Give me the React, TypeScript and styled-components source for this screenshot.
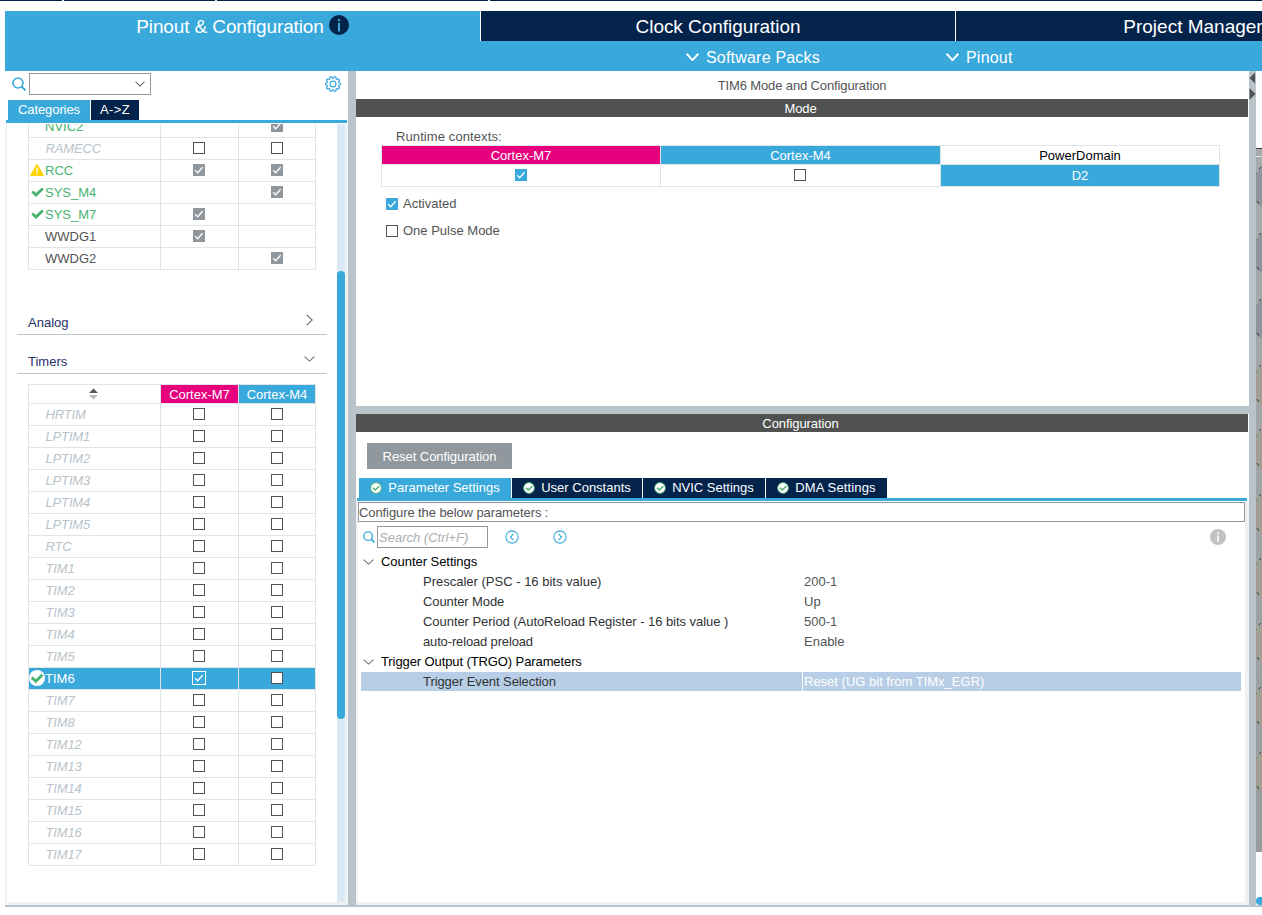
import React from 'react';
import styled, { createGlobalStyle, css } from 'styled-components';

const c = {
  blue: '#39a9dc', navy: '#03234b', pink: '#e6007e', split: '#b8c4ca', bar: '#4f5251',
  line: '#e1e4e7', text: '#525355', grey: '#90989e', green: '#49b170', pale: '#b9c3ca',
};

const Global = createGlobalStyle`
  * { box-sizing: border-box; }
  body { margin: 0; background: #fff; font: 13px/16px "Liberation Sans", Arial, sans-serif; color: ${c.text}; overflow: hidden; }
`;

const Page = styled.div`width: 1262px; height: 915px; overflow: hidden; display: flex; flex-direction: column;`;
const TopStrip = styled.div`display: flex; gap: 2px; height: 1px; margin-bottom: 10px; flex: none;`;
const Strip = styled.div<{ w?: number }>`background: ${c.navy}; ${p => p.w ? `width: ${p.w}px;` : 'flex: 1;'}`;

const Header = styled.header`margin-left: 5px; height: 60px; flex: none; background: ${c.blue}; color: #fff;`;
const MainTabs = styled.nav`display: flex; height: 30px; gap: 1px;`;
const MainTab = styled.div<{ $active?: boolean }>`
  flex: none; width: ${p => p.$active ? 475 : 474}px; height: 30px; display: flex; justify-content: center; align-items: center; gap: 5px;
  background: ${p => p.$active ? c.blue : c.navy}; font-size: 19px; line-height: 28px; white-space: nowrap;
  box-shadow: 1px 0 0 #fff;
  span { padding-top: 2px; }
  svg { margin-bottom: 2px; }
`;
const SubBar = styled.div`display: flex; height: 30px; padding-left: 681px;`;
const SubMenu = styled.div<{ w: number }>`
  width: ${p => p.w}px; display: flex; align-items: center; gap: 7px; font-size: 16px; line-height: 30px;
  span { padding-top: 3px; }
  svg { margin-top: 2px; }
`;

const Body = styled.main`display: flex; height: 834px; margin-left: 5px; flex: none;`;
const BottomEdge = styled.div`height: 2px; margin-left: 5px; background: ${c.split}; flex: none;`;
const Splitter = styled.div<{ w: number }>`width: ${p => p.w}px; flex: none; background: ${c.split};`;
const HSplit = styled.div`height: 8px; margin-right: -1px; flex: none; background: ${c.split};`;

const Left = styled.aside`width: 343px; flex: none; display: flex; flex-direction: column;`;
const SearchRow = styled.div`
  height: 29px; display: flex; align-items: center; padding: 0 0 3px 7px;
  svg { flex: none; }
`;
const Combo = styled.div`width: 122px; height: 22px; border: 1px solid ${c.grey}; margin: 0 174px 0 3px; display: flex; justify-content: flex-end; align-items: center; padding-right: 5px;`;
const Tabs = styled.div<{ pl: number }>`display: flex; gap: 1px; height: 20px; padding-left: ${p => p.pl}px; flex: none;`;
const Tab = styled.div<{ w: number; $active?: boolean; ls?: number }>`
  width: ${p => p.w}px; height: 20px; display: flex; align-items: center; justify-content: center; gap: 6px; white-space: nowrap;
  background: ${p => p.$active ? c.blue : c.navy}; color: #fff; letter-spacing: ${p => p.ls ?? 0}px;
`;
const BlueLine = styled.div`height: 3px; margin: 0 1px; flex: none; background: ${c.blue};`;
const ScrollArea = styled.div`
  flex: 1; min-height: 0; margin-top: 1px; overflow: hidden; display: flex;
  border: solid #f0f1f2; border-width: 0 3px 3px 2px;
`;
const ScrollContent = styled.div`flex: 1; margin-top: -8px; min-width: 0; height: 786px;`;
const Track = styled.div`width: 8px; background: #dae9f5; padding-top: 147px;`;
const Thumb = styled.div`height: 448px; border-radius: 4px; background: ${c.blue};`;

const Table = styled.div`margin-left: 21px; width: 288px; border-left: 1px solid ${c.line};`;
const Row = styled.div<{ $head?: boolean; $sel?: boolean }>`
  display: grid; grid-template-columns: 132px 78px 77px; height: ${p => p.$head ? 20 : 22}px;
  ${p => p.$head && css`border-top: 1px solid ${c.line};`}
  background: ${p => p.$sel ? c.blue : '#fff'};
`;
const Cell = styled.div`border: solid ${c.line}; border-width: 0 1px 1px 0; display: flex; align-items: center; padding: 0 0 1px 32px;`;
const NameCell = styled(Cell)<{ kind: Kind }>`
  padding: 0;
  color: ${p => ({ off: c.pale, ok: c.green, warn: c.green, green: c.green, plain: c.text, sel: '#fff' })[p.kind]};
  ${p => p.kind === 'off' && 'font-style: italic; letter-spacing: -.15px; padding-left: .5px;'}
`;
const IconSlot = styled.span`width: 16px; height: 16px; margin-bottom: 1px; flex: none; display: flex; align-items: center; justify-content: center;`;
const HeadCell = styled(Cell)<{ bg?: string }>`padding: 1px 0 0; justify-content: center; color: #fff; background: ${p => p.bg ?? '#fff'}; background-clip: padding-box; svg { margin: 0 2px 2px 0; }`;
const Section = styled.div<{ h: number }>`
  margin: 0 10px 0 10px; height: ${p => p.h}px; border-bottom: 1px solid ${c.split}; color: #28316a;
  display: flex; align-items: flex-end; justify-content: space-between; padding: 0 12px 3px 11px;
`;
const SectionIcon = styled.span`width: 11px; height: 22px; flex: none; display: flex; align-items: center; justify-content: center;`;

const BoxEl = styled.span<{ bg: string; bd: string; $big?: boolean }>`
  width: 12px; height: 12px; flex: none; display: flex; align-items: center; justify-content: center;
  border: 1px solid ${p => p.bd}; background: ${p => p.bg};
  ${p => p.$big && css`width: 14px; height: 14px; margin-left: -1px;`}
`;

const Middle = styled.section`width: 893px; flex: none; padding-right: 1px; background: #fff; display: flex; flex-direction: column;`;
const Title = styled.div`height: 28px; line-height: 30px; text-align: center; letter-spacing: -.12px;`;
const Bar = styled.div`height: 18px; line-height: 19px; flex: none; text-align: center; background: ${c.bar}; color: #fff; padding-right: 3px; letter-spacing: -.08px;`;
const ModePane = styled.div`height: 289px; flex: none; padding: 12px 28px 0 25px;`;
const Contexts = styled.div`display: grid; grid-template-columns: 279px 280px 279px; grid-template-rows: 19px 22px; border: solid ${c.line}; border-width: 1px 0 0 1px;`;
const Ctx = styled.div<{ bg?: string; fg?: string; $head?: boolean; $nudge?: boolean }>`
  border: solid ${c.line}; border-width: 0 1px 1px 0; background: ${p => p.bg ?? '#fff'}; background-clip: padding-box; color: ${p => p.fg ?? '#fff'};
  display: flex; align-items: center; justify-content: center;
  padding: ${p => p.$head ? '2px 0 0' : p.bg ? '0' : '0 0 1px'};
  ${p => p.$nudge && 'padding-right: 1px;'}
`;
const RuntimeLabel = styled.div`height: 16px; padding-left: 15px; letter-spacing: .1px;`;
const CheckLine = styled.div`display: flex; align-items: center; gap: 5px; height: 27px; padding-left: 5px;`;

const Button = styled.div`width: 145px; height: 26px; margin: 11px 0 9px 11px; background: ${c.grey}; color: #fff; text-align: center; line-height: 27px; letter-spacing: -.06px; flex: none;`;
const ConfigArea = styled.div`flex: 1; min-height: 0; margin-right: -1px; padding-top: 1px; border: solid #f0f1f2; border-width: 0 4px 3px 2px;`;
const Describe = styled.div`height: 20px; border: 1px solid ${c.grey}; line-height: 19px; letter-spacing: -.09px;`;
const FindRow = styled.div`height: 30px; display: flex; align-items: center; padding-left: 5px;`;
const Find = styled.div`width: 111px; height: 22px; margin: 0 17px 0 2px; border: 1px solid ${c.grey}; color: #a9aeb2; font-style: italic; line-height: 21px; padding-left: 1px;`;
const Group = styled.div`height: 20px; display: flex; align-items: center; gap: 7px; padding-left: 5px; color: #000; letter-spacing: -.04px;`;
const Param = styled.div<{ $sel?: boolean }>`
  height: ${p => p.$sel ? 19 : 20}px; margin: 0 4px 0 3px; display: grid; grid-template-columns: 441px 1fr; line-height: 19px;
  background: ${p => p.$sel ? '#b8cee6' : 'transparent'};
`;
const ParamName = styled.div<{ ls?: number }>`padding-left: 62px; color: #303234; letter-spacing: ${p => p.ls ?? 0}px;`;
const ParamValue = styled.div<{ $sel?: boolean }>`padding-left: 2px; ${p => p.$sel && 'padding-left: 1px; border-left: 1px solid #fff; color: #fff;'}`;
const Gap = styled.div<{ w?: number; h?: number }>`width: ${p => p.w ?? 0}px; height: ${p => p.h ?? 0}px; flex: none;`;

const PinView = styled.div`width: 6px; flex: none; height: 834px;`;
const Txt = styled.span<{ ls?: number }>`letter-spacing: ${p => p.ls ?? 0}px; white-space: pre;`;

type Kind = 'off' | 'ok' | 'warn' | 'green' | 'plain' | 'sel';
type Mark = 'none' | 'empty' | 'grey' | 'blue' | 'sel';

const Box = ({ mark }: { mark: Mark }) => {
  if (mark === 'none') return null;
  const bg = { empty: '#fff', grey: c.grey, blue: c.blue, sel: c.blue }[mark];
  const bd = { empty: c.text, grey: c.grey, blue: c.blue, sel: '#fff' }[mark];
  return (
    <BoxEl bg={bg} bd={bd} $big={mark === 'sel'}>
      {mark !== 'empty' && <svg width="10" height="10" viewBox="0 0 10 10" overflow="visible"><path d="M1.2 5.2 3.7 7.7 8.6 2.2" fill="none" stroke="#fff" strokeWidth="1.3" /></svg>}
    </BoxEl>
  );
};

const Chevron = ({ w = 10, h = 6, s = 1.1, color = '#6d7174' }) => (
  <svg width={w} height={h} viewBox={`0 0 ${w} ${h}`}><path d={`M.6 .7 ${w / 2} ${h - 0.9} ${w - 0.6} .7`} fill="none" stroke={color} strokeWidth={s} /></svg>
);
const Search = ({ size }: { size: number }) => (
  <svg width={size} height={size} viewBox="0 0 14 14" fill="none" stroke={c.blue}><circle cx="6" cy="6" r="5" strokeWidth="1.6" /><path d="M9.6 9.6 13.4 13.4" strokeWidth="2" /></svg>
);
const Gear = () => {
  let d = '';
  for (let i = 0; i <= 80; i++) {
    const a = (i / 80) * Math.PI * 2;
    const r = 6.8 + 0.8 * Math.max(-1, Math.min(1, 1.8 * Math.cos(a * 10)));
    d += `${i ? 'L' : 'M'}${(8 + r * Math.cos(a)).toFixed(2)} ${(8 + r * Math.sin(a)).toFixed(2)}`;
  }
  return <svg width="16" height="16" viewBox="0 0 16 16" fill="none" stroke={c.blue} strokeWidth="1.2"><path d={d + 'Z'} /><circle cx="8" cy="8" r="2.9" /></svg>;
};
const Info = ({ size, bg, fg }: { size: number; bg: string; fg: string }) => (
  <svg width={size} height={size} viewBox="0 0 20 20"><circle cx="10" cy="10" r="10" fill={bg} /><path d="M10 8V16.4M10 4v2.2" stroke={fg} strokeWidth="2" /></svg>
);
const Tick = () => <svg width="13" height="10" viewBox="0 0 13 10"><path d="M1.3 4.4 5 8 11.8 1.4" fill="none" stroke={c.green} strokeWidth="2.8" /></svg>;
const RoundTick = () => <svg width="16" height="16" viewBox="0 0 16 16"><circle cx="8" cy="8" r="8" fill="#fff" /><path d="M2.8 7.4 6.8 11.2 13.4 4.8" fill="none" stroke={c.green} strokeWidth="2.8" /></svg>;
const Warn = () => <svg width="14" height="12" viewBox="0 0 14 12"><path d="M7 .8 13 11.2H1Z" fill="#ffd200" stroke="#ffd200" strokeWidth="1.4" strokeLinejoin="round" /><path d="M7 3.6V8M7 9V10.3" stroke="#fff" strokeWidth="1.3" /></svg>;
const TabTick = () => <svg width="12" height="12" viewBox="0 0 12 12"><circle cx="6" cy="6" r="5.4" fill="#fff" stroke={c.green} strokeWidth=".9" /><path d="M3 5.8 5.3 8 9.2 4.2" fill="none" stroke={c.green} strokeWidth="1.5" /></svg>;
const Nav = ({ d }: { d: string }) => <svg width="14" height="14" viewBox="0 0 14 14" fill="none" stroke={c.blue}><circle cx="7" cy="7" r="6.1" strokeWidth="1.1" /><path d={d} strokeWidth="1.2" /></svg>;
const Sort = () => <svg width="9" height="12" viewBox="0 0 9 12"><path d="M0 5 4.5 .5 9 5Z" fill="#555a5d" /><path d="M0 7 4.5 11.5 9 7Z" fill="#b8bcbf" /></svg>;

const system: [string, Kind, Mark, Mark][] = [
  ['NVIC2', 'green', 'none', 'grey'], ['RAMECC', 'off', 'empty', 'empty'], ['RCC', 'warn', 'grey', 'grey'],
  ['SYS_M4', 'ok', 'none', 'grey'], ['SYS_M7', 'ok', 'grey', 'none'], ['WWDG1', 'plain', 'grey', 'none'], ['WWDG2', 'plain', 'none', 'grey'],
];
const timers = ['HRTIM', 'LPTIM1', 'LPTIM2', 'LPTIM3', 'LPTIM4', 'LPTIM5', 'RTC', 'TIM1', 'TIM2', 'TIM3', 'TIM4', 'TIM5', 'TIM6', 'TIM7', 'TIM8', 'TIM12', 'TIM13', 'TIM14', 'TIM15', 'TIM16', 'TIM17'];

const Peripheral = ({ name, kind, a, b }: { name: string; kind: Kind; a: Mark; b: Mark }) => (
  <Row $sel={kind === 'sel'}>
    <NameCell kind={kind}><IconSlot>{kind === 'ok' && <Tick />}{kind === 'warn' && <Warn />}{kind === 'sel' && <RoundTick />}</IconSlot>{name}</NameCell>
    <Cell><Box mark={a} /></Cell>
    <Cell><Box mark={b} /></Cell>
  </Row>
);

const pinYs = [166, 232, 298, 364, 428, 493, 557, 622, 686, 751];

export default function App() {
  return (
    <Page>
      <Global />
      <TopStrip><Strip w={62} /><Strip w={151} /><Strip w={271} /><Strip /></TopStrip>
      <Header>
        <MainTabs>
          <MainTab $active><Txt ls={-0.12}>Pinout &amp; Configuration</Txt><Info size={20} bg={c.navy} fg={c.blue} /></MainTab>
          <MainTab><Txt ls={-0.05}>Clock Configuration</Txt></MainTab>
          <MainTab><Txt>Project Manager</Txt></MainTab>
        </MainTabs>
        <SubBar>
          <SubMenu w={260}><Chevron w={13} h={8} s={2} color="#fff" /><Txt ls={0.2}>Software Packs</Txt></SubMenu>
          <SubMenu w={200}><Chevron w={13} h={8} s={2} color="#fff" /><Txt ls={0.2}>Pinout</Txt></SubMenu>
        </SubBar>
      </Header>
      <Body>
        <Left>
          <SearchRow><Search size={14} /><Combo><Chevron /></Combo><Gear /></SearchRow>
          <Tabs pl={3}><Tab w={82} $active ls={-0.1}>Categories</Tab><Tab w={48} ls={0.4}>A-&gt;Z</Tab></Tabs>
          <BlueLine />
          <ScrollArea>
            <ScrollContent>
              <Table>{system.map(([n, k, a, b]) => <Peripheral key={n} name={n} kind={k} a={a} b={b} />)}</Table>
              <Gap h={25} />
              <Section h={40}>Analog<SectionIcon><svg width="7" height="12" viewBox="0 0 7 12"><path d="M.7 .8 6.2 6 .7 11.2" fill="none" stroke="#6d7174" strokeWidth="1.1" /></svg></SectionIcon></Section>
              <Section h={39}>Timers<SectionIcon><Chevron w={11} /></SectionIcon></Section>
              <Gap h={10} />
              <Table>
                <Row $head><HeadCell><Sort /></HeadCell><HeadCell bg={c.pink}>Cortex-M7</HeadCell><HeadCell bg={c.blue}>Cortex-M4</HeadCell></Row>
                {timers.map(n => <Peripheral key={n} name={n} kind={n === 'TIM6' ? 'sel' : 'off'} a={n === 'TIM6' ? 'sel' : 'empty'} b="empty" />)}
              </Table>
            </ScrollContent>
            <Track><Thumb /></Track>
          </ScrollArea>
        </Left>
        <Splitter w={8} />
        <Middle>
          <Title>TIM6 Mode and Configuration</Title>
          <Bar>Mode</Bar>
          <ModePane>
            <RuntimeLabel>Runtime contexts:</RuntimeLabel>
            <Contexts>
              <Ctx $head bg={c.pink}>Cortex-M7</Ctx><Ctx $head bg={c.blue}>Cortex-M4</Ctx><Ctx $head fg="#000">PowerDomain</Ctx>
              <Ctx><Box mark="blue" /></Ctx><Ctx $nudge><Box mark="empty" /></Ctx><Ctx bg={c.blue}>D2</Ctx>
            </Contexts>
            <Gap h={3} />
            <CheckLine><Box mark="blue" />Activated</CheckLine>
            <CheckLine><Box mark="empty" />One Pulse Mode</CheckLine>
          </ModePane>
          <HSplit />
          <Bar>Configuration</Bar>
          <Button>Reset Configuration</Button>
          <Tabs pl={3}>
            <Tab w={152} $active><TabTick />Parameter Settings</Tab>
            <Tab w={130}><TabTick />User Constants</Tab>
            <Tab w={122}><TabTick />NVIC Settings</Tab>
            <Tab w={121} ls={0.15}><TabTick />DMA Settings</Tab>
          </Tabs>
          <BlueLine />
          <ConfigArea>
            <Describe>Configure the below parameters :</Describe>
            <FindRow>
              <Search size={12} /><Find>Search (Ctrl+F)</Find>
              <Nav d="M8.3 4.2 5.5 7l2.8 2.8" /><Gap w={34} /><Nav d="M5.7 4.2 8.5 7 5.7 9.8" />
              <Gap w={643} /><Info size={16} bg="#c2c2c2" fg="#fff" />
            </FindRow>
            <Group><Chevron w={11} />Counter Settings</Group>
            <Param><ParamName>Prescaler (PSC - 16 bits value)</ParamName><ParamValue>200-1</ParamValue></Param>
            <Param><ParamName ls={-0.1}>Counter Mode</ParamName><ParamValue>Up</ParamValue></Param>
            <Param><ParamName ls={-0.05}>Counter Period (AutoReload Register - 16 bits value )</ParamName><ParamValue>500-1</ParamValue></Param>
            <Param><ParamName ls={-0.15}>auto-reload preload</ParamName><ParamValue>Enable</ParamValue></Param>
            <Group><Chevron w={11} /><Txt ls={-0.1}>Trigger Output (TRGO) Parameters</Txt></Group>
            <Param $sel><ParamName ls={-0.08}>Trigger Event Selection</ParamName><ParamValue $sel>Reset (UG bit from TIMx_EGR)</ParamValue></Param>
          </ConfigArea>
        </Middle>
        <Splitter w={7}>
          <svg width="7" height="32" viewBox="0 0 7 32"><path d="M6 1.5V12.5L.5 7ZM.5 17V29L6.5 23Z" fill="#515456" /></svg>
        </Splitter>
        <PinView>
          <svg width="6" height="834" viewBox="0 71 6 834">
            <defs><linearGradient id="chip" x1="0" x2="0" y1="0" y2="1"><stop offset="0" stopColor="#a7abac" /><stop offset="1" stopColor="#999c9d" /></linearGradient></defs>
            <rect y="148" width="6" height="704" fill="url(#chip)" />
            <path d="M0 148.5H6" stroke="#404344" /><path d="M0 156.5H6" stroke="#e4e5e6" />
            {pinYs.map((y, i) => (
              <g key={y}>
                <path d={`M6 ${y}L0 ${y + 8}V${y + 36}L6 ${y + 41}Z`} fill={i < 3 ? '#8d949b' : '#a09f91'} />
                <path d={`M3 ${y + 3}L5 ${y + 1}M0 ${y + 7}V${y + 8}M1 ${y + 35}L3 ${y + 38}`} stroke="#3c4042" />
              </g>
            ))}
            <circle cx="4" cy="901" r="4" fill={c.blue} /><rect x="4" y="897" width="2" height="8" fill={c.blue} />
          </svg>
        </PinView>
      </Body>
      <BottomEdge />
    </Page>
  );
}
